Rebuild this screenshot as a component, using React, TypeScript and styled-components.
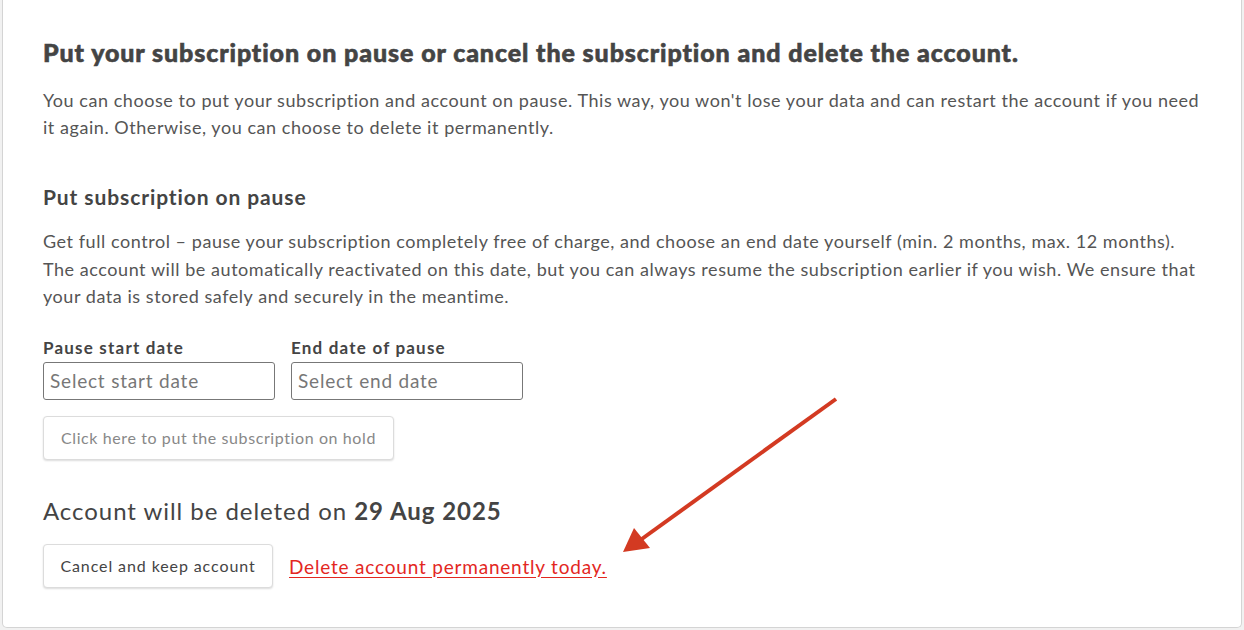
import React from "react";
import styled, { createGlobalStyle } from "styled-components";

const Global = createGlobalStyle`
  html, body { margin: 0; padding: 0; background: #f1f1f1; }
  body { font-family: Lato, "Open Sans", sans-serif; color: #444; }
`;

const Card = styled.div`
  position: relative;
  margin: 0 2px;
  width: 1240px;
  height: 628px;
  box-sizing: border-box;
  background: #fff;
  border: 1px solid #d4d4d4;
  border-top: none;
  border-radius: 0 0 5px 5px;
  padding: 37px 40px 0 40px;
  display: flex;
  flex-direction: column;
`;

const Title = styled.h1`
  margin: 0;
  font-size: 25px;
  font-weight: 900;
  letter-spacing: 0.9px;
  color: #444;
  -webkit-text-stroke: 0.6px #444;
  line-height: 30px;
`;

const Para = styled.p<{ $mt: number; $lh: number }>`
  margin: ${(p) => p.$mt}px 0 0;
  font-size: 18px;
  letter-spacing: 0.55px;
  line-height: ${(p) => p.$lh}px;
  color: #555;
`;

const Subtitle = styled.h2`
  margin: 43px 0 0;
  font-size: 21px;
  font-weight: 700;
  letter-spacing: 0.9px;
  color: #444;
  line-height: 26px;
`;

const Fields = styled.div`
  display: flex;
  gap: 16px;
  margin-top: 28px;
`;

const Field = styled.label`
  display: flex;
  flex-direction: column;
  gap: 5px;
`;

const Label = styled.span`
  font-size: 17px;
  font-weight: 700;
  letter-spacing: 1.2px;
  color: #444;
  line-height: 18px;
`;

const Input = styled.input`
  width: 232px;
  height: 38px;
  box-sizing: border-box;
  border: 1px solid #777;
  border-radius: 3px;
  padding: 0 6px;
  font-family: inherit;
  font-size: 19px;
  letter-spacing: 0.8px;
  color: #444;
  &::placeholder { color: #777; }
`;

const Button = styled.button<{ $muted?: boolean }>`
  align-self: flex-start;
  height: 44px;
  box-sizing: border-box;
  padding: 0;
  white-space: nowrap;
  text-align: center;
  background: #fff;
  border: 1px solid #dcdcdc;
  border-radius: 4px;
  box-shadow: 0 1px 2px rgba(0, 0, 0, 0.14);
  font-family: inherit;
  font-size: 16px;
  letter-spacing: 0.6px;
  color: ${(p) => (p.$muted ? "#888" : "#444")};
`;

const HoldButton = styled(Button)`
  margin-top: 16px;
  width: 351px;
`;

const Deletion = styled.div`
  margin-top: 36px;
  font-size: 24px;
  letter-spacing: 0.95px;
  line-height: 30px;
  color: #444;
  b { font-weight: 700; }
`;

const Actions = styled.div`
  display: flex;
  align-items: center;
  gap: 16px;
  margin-top: 18px;
`;

const CancelButton = styled(Button)`
  width: 230px;
  letter-spacing: 0.9px;
`;

const DeleteLink = styled.a`
  font-size: 19px;
  letter-spacing: 0.8px;
  color: #e3271f;
  text-decoration: underline;
  text-underline-offset: 3px;
  margin-top: 1px;
`;

const Arrow = styled.svg`
  position: absolute;
  left: 0;
  top: 0;
  pointer-events: none;
`;

export default function App() {
  return (
    <>
      <Global />
      <Card>
        <Title>Put your subscription on pause or cancel the subscription and delete the account.</Title>
        <Para $mt={20} $lh={27}>
          You can choose to put your subscription and account on pause. This way, you won't lose your data and can restart the account if you need it again. Otherwise, you can choose to delete it permanently.
        </Para>
        <Subtitle>Put subscription on pause</Subtitle>
        <Para $mt={18} $lh={27.5}>
          Get full control – pause your subscription completely free of charge, and choose an end date yourself (min. 2 months, max. 12 months). The account will be automatically reactivated on this date, but you can always resume the subscription earlier if you wish. We ensure that your data is stored safely and securely in the meantime.
        </Para>
        <Fields>
          <Field>
            <Label>Pause start date</Label>
            <Input placeholder="Select start date" />
          </Field>
          <Field>
            <Label>End date of pause</Label>
            <Input placeholder="Select end date" />
          </Field>
        </Fields>
        <HoldButton $muted>Click here to put the subscription on hold</HoldButton>
        <Deletion>
          Account will be deleted on <b>29 Aug 2025</b>
        </Deletion>
        <Actions>
          <CancelButton>Cancel and keep account</CancelButton>
          <DeleteLink href="#">Delete account permanently today.</DeleteLink>
        </Actions>
        <Arrow width="1240" height="628" viewBox="0 0 1240 628">
          <line x1="833" y1="399" x2="636" y2="541" stroke="#d33a22" strokeWidth="4" />
          <polygon points="620,552 631,528 647,548" fill="#d33a22" />
        </Arrow>
      </Card>
    </>
  );
}
